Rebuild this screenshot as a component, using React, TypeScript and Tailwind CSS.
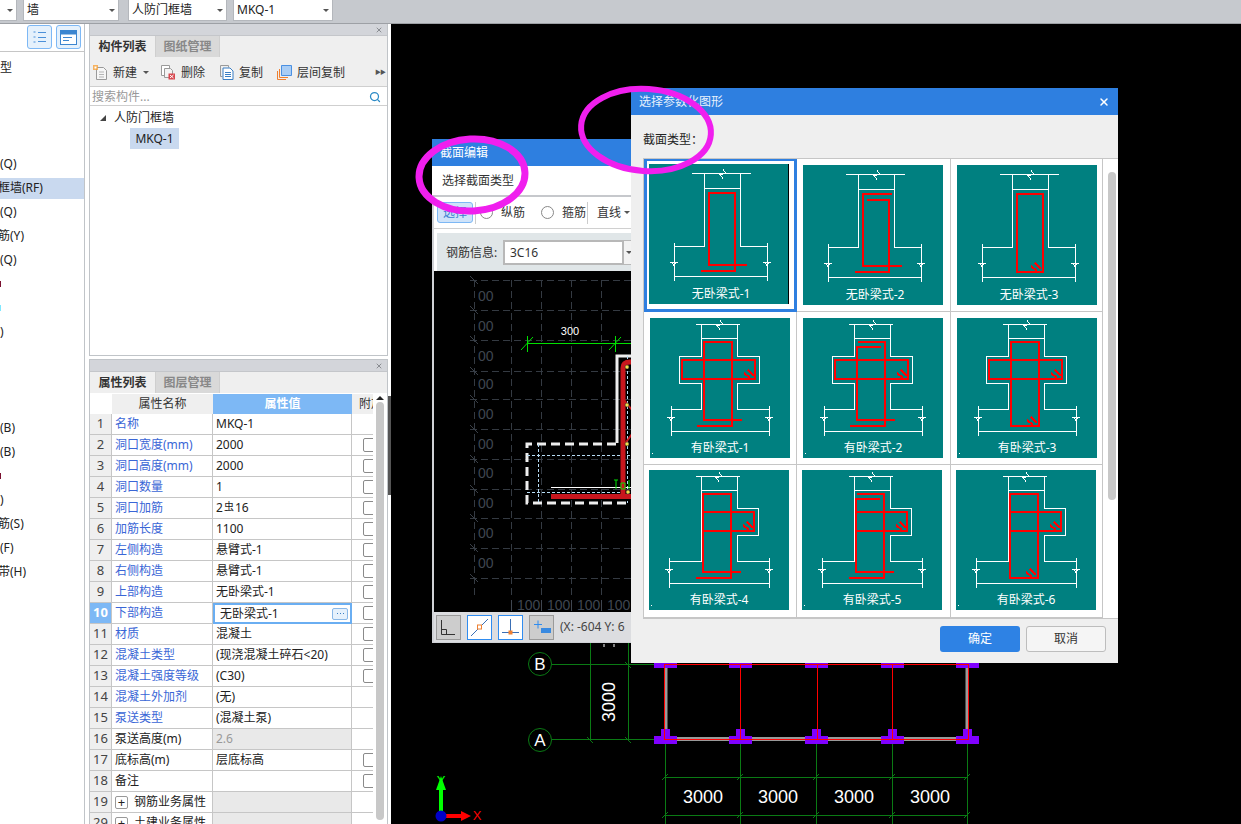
import { Search, X } from 'lucide-react';

const FONT = "[font-family:'Noto_Sans','Noto_Sans_CJK_SC',sans-serif]";

// left tree, only the part that is not covered is visible
const treeRows: { t: string; shift?: boolean; active?: boolean; tiny?: string }[] = [
  { t: '型' }, { t: '' }, { t: '' }, { t: '' },
  { t: '(Q)' },
  { t: '框墙(RF)', shift: true, active: true },
  { t: '(Q)' },
  { t: '筋(Y)', shift: true },
  { t: '(Q)' },
  { t: '', tiny: 'bg-[#7a1030]' },
  { t: '', tiny: 'bg-[#7fe8ff]' },
  { t: ')' },
  { t: '' }, { t: '' }, { t: '' },
  { t: '(B)' }, { t: '(B)' },
  { t: '', tiny: 'bg-[#7a1030]' },
  { t: ')' },
  { t: '筋(S)', shift: true },
  { t: '(F)' },
  { t: '带(H)', shift: true },
];

type Prop = { n: string; v: React.ReactNode; link?: boolean; check?: boolean; grey?: boolean; plus?: boolean; num?: number };

const props: Prop[] = [
  { n: '名称', v: 'MKQ-1', link: true },
  { n: '洞口宽度(mm)', v: '2000', link: true, check: true },
  { n: '洞口高度(mm)', v: '2000', link: true, check: true },
  { n: '洞口数量', v: '1', link: true, check: true },
  { n: '洞口加筋', v: <>2<span className="text-[10px] relative -top-px px-px">虫</span>16</>, link: true, check: true },
  { n: '加筋长度', v: '1100', link: true, check: true },
  { n: '左侧构造', v: '悬臂式-1', link: true, check: true },
  { n: '右侧构造', v: '悬臂式-1', link: true, check: true },
  { n: '上部构造', v: '无卧梁式-1', link: true, check: true },
  { n: '下部构造', v: '无卧梁式-1', link: true, check: true },
  { n: '材质', v: '混凝土', link: true, check: true },
  { n: '混凝土类型', v: '(现浇混凝土碎石<20)', link: true, check: true },
  { n: '混凝土强度等级', v: '(C30)', link: true, check: true },
  { n: '混凝土外加剂', v: '(无)', link: true },
  { n: '泵送类型', v: '(混凝土泵)', link: true },
  { n: '泵送高度(m)', v: '2.6', grey: true },
  { n: '底标高(m)', v: '层底标高', check: true },
  { n: '备注', v: '', check: true },
  { n: '钢筋业务属性', v: '', plus: true, grey: true },
  { n: '土建业务属性', v: '', plus: true, grey: true, num: 29 },
];

function Dropdown({ text, className }: { text?: string; className: string }) {
  return (
    <div className={`h-[21px] bg-white border-b border-r border-l border-[#b4b7bc] flex items-center pl-[3px] pr-[3px] text-xs text-[#222] ${className}`}>
      <span className="flex-1">{text}</span>
      <span className="w-0 h-0 border-x-[3px] border-x-transparent border-t-[3px] border-t-[#555]" />
    </div>
  );
}

function PanelHead({ first, second }: { first: string; second: string }) {
  return (
    <>
      <div className="h-[12px] shrink-0 bg-[#d3d5da] border-b border-[#c4c6ca] flex items-center justify-end pr-[4px]">
        <X size={8} strokeWidth={3} className="text-[#8a8d92]" />
      </div>
      <div className="h-[21px] shrink-0 bg-[#efefef] flex text-xs">
        <div className="w-[65px] pt-px flex items-center justify-center font-bold text-[#333]">{first}</div>
        <div className="w-[65px] pt-px flex items-center justify-center font-bold text-[#888] bg-[#d9d9d9] border-l border-r border-[#cfcfcf]">{second}</div>
      </div>
    </>
  );
}

function ToolIcon({ kind }: { kind: string }) {
  if (kind === 'new')
    return (
      <svg width="15" height="15" viewBox="0 0 15 15">
        <path d="M3.5 2.5h7l3 3v9h-10z" fill="#f6f6f6" stroke="#9a9a9a" />
        <path d="M6 7h5M6 9.5h5M6 12h5" stroke="#b5b5b5" />
        <path d="M0 0h5v5H0z" fill="#f7a23b" opacity=".8" />
        <path d="M1.5 1.5h2v2h-2z" fill="#fff" />
      </svg>
    );
  if (kind === 'del')
    return (
      <svg width="15" height="15" viewBox="0 0 15 15">
        <path d="M.5 .5h8v10h-8z" fill="#fff" stroke="#9a9a9a" />
        <path d="M3.5 3.5h6l2 2v7h-8z" fill="#f3f3f3" stroke="#9a9a9a" />
        <path d="M7.5 8.5h6.5v6h-6.5z" fill="#d8474e" />
        <path d="M9 10l3.5 3M12.5 10L9 13" stroke="#fff" />
      </svg>
    );
  if (kind === 'copy')
    return (
      <svg width="14" height="15" viewBox="0 0 14 15">
        <path d="M.5 .5h8v2" fill="none" stroke="#9a9a9a" />
        <path d="M.5 .5v11h2" fill="none" stroke="#9a9a9a" />
        <path d="M3 3h7l3 3v8.500H3z" fill="#fff" stroke="#3b7fc4" />
        <path d="M5 7.500h6M5 9.500h6M5 11.500h6" stroke="#3b7fc4" />
      </svg>
    );
  return (
    <svg width="15" height="15" viewBox="0 0 15 15">
      <path d="M.5 14.500V6M.5 14.500H9" fill="none" stroke="#f08030" />
      <path d="M2.500 12.500V4M2.500 12.500H11" fill="none" stroke="#f08030" />
      <path d="M4.500 .5h10v10h-10z" fill="#a9cdf5" stroke="#4a90e2" />
    </svg>
  );
}

function Tool({ icon, text, className }: { icon: string; text: string; className?: string }) {
  return (
    <div className={`flex items-center gap-[5px] text-xs text-[#333] ${className ?? ''}`}>
      <ToolIcon kind={icon} />
      <span>{text}</span>
    </div>
  );
}

function PropRow({ row, idx }: { row: Prop; idx: number }) {
  const isActive = idx === 10;
  return (
    <div className="grid grid-cols-[22px_101px_139px_21px] h-[21px] shrink-0 text-xs overflow-hidden">
      <div className={`flex items-center justify-center border-r border-b border-[#c6c6c6] text-[13px] ${isActive ? 'bg-[#7db8f5] text-white font-bold' : 'bg-[#efefef] text-[#444]'}`}>
        {row.num ?? idx}
      </div>
      <div className={`flex items-center pl-[3px] border-r border-b border-[#c6c6c6] whitespace-nowrap ${row.link ? 'text-[#3a66d6]' : 'text-[#222]'}`}>
        {row.plus && (
          <span className="w-[13px] h-[13px] mr-[6px] border border-[#999] rounded-[2px] flex items-center justify-center text-[13px] leading-none text-[#222]">+</span>
        )}
        {row.n}
      </div>
      {isActive ? (
        <div className="flex items-center pl-[5px] pr-[2px] border-2 border-[#6aaef2] text-[#222]">
          <span className="flex-1">{row.v}</span>
          <span className="w-[16px] h-[12px] border border-[#8ab8e8] bg-[#e6f1fc] rounded-[2px] flex items-center justify-center gap-[2px]">
            <i className="w-px h-px bg-[#3b7fc4]" /><i className="w-px h-px bg-[#3b7fc4]" /><i className="w-px h-px bg-[#3b7fc4]" />
          </span>
        </div>
      ) : (
        <div className={`flex items-center pl-[3px] border-r border-b border-[#c6c6c6] whitespace-nowrap ${row.grey ? 'bg-[#e9e9e9] text-[#999]' : 'text-[#222]'}`}>
          {row.v}
        </div>
      )}
      <div className="border-b border-[#c6c6c6] pl-[11px] pt-[3px] overflow-hidden">
        {row.check && <div className="w-[13px] h-[14px] border border-[#8a8a8a] rounded-[2px] bg-white" />}
      </div>
    </div>
  );
}

// the teal section thumbnails
function BreakTop({ x, y }: { x: number; y: number }) {
  return <path d={`M${x} ${y - 4}L${x + 3} ${y}L${x - 3} ${y + 1}L${x} ${y + 5}`} fill="none" stroke="#fff" />;
}

function BreakSide({ x, y }: { x: number; y: number }) {
  return <path d={`M${x - 4} ${y}H${x + 4}M${x - 2} ${y}L${x} ${y + 4}L${x + 2} ${y}`} fill="none" stroke="#fff" />;
}

function Hook({ x, y }: { x: number; y: number }) {
  return <path d={`M${x - 10} ${y - 5}L${x - 4} ${y}M${x - 6} ${y - 8}L${x} ${y - 2}`} fill="none" stroke="#f00" strokeWidth="2" />;
}

function Section({ beam, style, label, selected }: { beam: 'none' | 'both' | 'right'; style: 1 | 2 | 3; label: string; selected?: boolean }) {
  let outline: string;
  let yDim = 112;
  let xl = 25;
  let xr = 118;
  if (beam === 'none') {
    outline = 'M43 9.500H102M55 9.500V82H25M91 9.500V82H118M55 24H91M25 79V117M118 79V117M25 112H118';
  } else if (beam === 'both') {
    xl = 21;
    xr = 119;
    yDim = 113;
    outline = 'M46 6.500H90M51 6.500V38.500H29V65.500H51V91.500H21M87 6.500V38.500H109V65.500H87V91.500H119M51 20.500H87M21 88V118M119 88V118M21 113.500H119';
  } else {
    xl = 20;
    xr = 120;
    yDim = 113;
    outline = 'M47 6.500H91M52 6.500V91.500H20M88 6.500V38.500H109V65.500H88V91.500H120M52 20.500H88M20 88V118M120 88V118M20 113.500H120';
  }
  const plain = beam === 'none';
  const tx = plain ? 74 : 70;
  const ty = plain ? 9.5 : 6.5;
  const vb = plain ? 107 : 108;
  return (
    <svg width="140" height="140" viewBox="0 0 140 140" className="block" style={{ shapeRendering: 'crispEdges' }}>
      <rect width="140" height="140" fill="#008080" />
      {selected && <path d="M140 0V140" stroke="#000" strokeWidth="1.500" />}
      <path d={outline} fill="none" stroke="#fff" />
      <BreakTop x={tx} y={ty} />
      <BreakSide x={xl} y={yDim - 14} />
      <BreakSide x={xr} y={yDim - 14} />
      <g fill="none" stroke="#f00" strokeWidth="2">
        {style === 1 && <path d={plain ? 'M52 107H86V29H60V101H98' : 'M47 108H82V24H54V102H92'} />}
        {style === 2 && (
          <>
            <path d={plain ? 'M52 107H86V35H64' : 'M47 108H82V24H55'} />
            <path d={plain ? 'M89 29H60V101H99' : 'M78 29H54V102H92'} />
          </>
        )}
        {style === 3 && <path d={plain ? 'M60 29H86V107H60Z' : 'M54 24H82V108H54Z'} />}
        {beam === 'both' && <path d="M32 42H105V61H32Z" />}
        {beam === 'right' && <path d="M55 42H105V61H55" />}
      </g>
      {style === 3 && <Hook x={plain ? 84 : 80} y={vb - 1} />}
      {!plain && <Hook x={104} y={60} />}
      {!plain && <rect x="2" y="135" width="1" height="1" fill="#fff" />}
      <text x={plain ? 72 : 70} y="134" textAnchor="middle" fontSize="12" fill="#fff" style={{ shapeRendering: 'auto' }}>{label}</text>
    </svg>
  );
}

const ROW_YS = [340, 371, 399, 429, 459, 489, 518, 548, 578];

function SectionCanvas() {
  return (
    <svg viewBox="434 271 198 341" className="w-[198px] h-[341px] block bg-black">
      <g stroke="#343a42" strokeDasharray="7 4" fill="none">
        {[280, 310, ...ROW_YS].map((y) => <path key={y} d={`M470 ${y}.5H632`} />)}
        {[474, 511, 541, 571, 601, 631].map((x) => <path key={x} d={`M${x}.5 280V598`} />)}
      </g>
      {[280, 310, ...ROW_YS].map((y) => <path key={y} d={`M470 ${y - 4}L478 ${y + 4}`} stroke="#3a4048" />)}
      <g fill="#3f4650" fontSize="14" fontFamily="'Liberation Sans',sans-serif">
        {[301, 331, 361, 389, 419, 449, 478, 508, 538, 568].map((y) => <text key={y} x="478" y={y}>00</text>)}
        {[517, 547, 577, 607].map((x) => <text key={x} x={x} y="610">100</text>)}
        {[511, 541, 571, 601].map((x) => <path key={x} d={`M${x}.5 600V611`} stroke="#3f4650" />)}
      </g>
      <text x="570" y="335" fill="#fff" fontSize="11" textAnchor="middle" fontFamily="'Liberation Sans',sans-serif">300</text>
      <path d="M527 343.500H632M527.500 336V352M521 350L533 337M615.500 336V352M609 350L621 337" stroke="#00e000" fill="none" />
      <path d="M617 443V356H632" stroke="#eee" strokeWidth="3" fill="none" />
      <path d="M616 444H527V503H632" stroke="#eee" strokeWidth="3" strokeDasharray="9 5" fill="none" />
      <path d="M527 455.500H632M527 492.500H632M538.500 444V503M627.500 356V503" stroke="#b7dcf5" strokeDasharray="3 2" fill="none" />
      <path d="M551 487.500H632" stroke="#fff" />
      <path d="M551 496.500H632" stroke="#c8161d" strokeWidth="5" />
      <path d="M623 496V368Q623 362 630 362H632" stroke="#c8161d" strokeWidth="5" fill="none" />
      <path d="M624 400L632 410M624 445L632 434" stroke="#c8161d" strokeWidth="2" />
      <path d="M614 480H618M616 480V489M621 483H625V489H621ZM629 480V489" stroke="#00e000" fill="none" />
      {[[627, 367], [627, 405], [627, 444], [628, 492]].map(([x, y]) => (
        <circle key={y} cx={x} cy={y} r="2" fill="#f5e04a" stroke="#222" strokeWidth=".5" />
      ))}
    </svg>
  );
}

function BarButton({ kind, on }: { kind: number; on?: boolean }) {
  return (
    <div className={`w-[25px] h-[25px] border flex items-center justify-center ${on ? 'bg-white border-[#2f8cf0]' : 'bg-[#cdcdcd] border-[#9a9a9a]'}`}>
      <svg width="21" height="21" viewBox="0 0 21 21">
        {kind === 0 && <path d="M3.500 3V17.500H17M3.500 12.500H8.500V17.500" fill="none" stroke="#333" />}
        {kind === 1 && (
          <>
            <path d="M2 19L19 2" stroke="#3a6fb5" />
            <rect x="8.500" y="8" width="4" height="4" fill="#fff" stroke="#f08030" />
          </>
        )}
        {kind === 2 && (
          <>
            <path d="M10.500 2V15M2 15.500H19" stroke="#3a6fb5" />
            <rect x="8.500" y="13.500" width="4" height="4" fill="#f08030" />
          </>
        )}
        {kind === 3 && (
          <>
            <path d="M3 7.500H11M7 3.500V11.500" stroke="#2f8cf0" />
            <rect x="10" y="11" width="10" height="5" fill="#3a8ae0" />
          </>
        )}
      </svg>
    </div>
  );
}

function SectionWindow() {
  return (
    <div className="absolute left-[41px] top-[115px] w-[200px] h-[504px] overflow-hidden bg-[#d0d2d6] flex flex-col">
      <div className="h-[27px] shrink-0 bg-[#2e7fe0] text-white text-xs flex items-center pl-[8px]">截面编辑</div>
      <div className="h-[29px] shrink-0 bg-white flex items-center pl-[10px] pt-px text-xs text-[#333]">选择截面类型</div>
      <div className="h-[2px] shrink-0 bg-[#c6c8cc]" />
      <div className="h-[32px] shrink-0 bg-white border-b border-[#d0d0d0] ml-[2px] flex items-center text-xs text-[#333] whitespace-nowrap">
        <div className="w-[36px] h-[21px] ml-[3px] rounded-[3px] bg-[#cfe3f9] border border-[#7db8f5] text-[#3a7fd0] flex items-center justify-center">选择</div>
        <div className="w-px h-[22px] bg-[#ccc] ml-[2px]" />
        <div className="w-[13px] h-[13px] rounded-full border border-[#888] ml-[4px]" />
        <span className="ml-[8px]">纵筋</span>
        <div className="w-[13px] h-[13px] rounded-full border border-[#888] ml-[16px]" />
        <span className="ml-[8px]">箍筋</span>
        <div className="w-px h-[22px] bg-[#ccc] ml-px" />
        <span className="ml-[9px]">直线</span>
        <span className="ml-[3px] w-0 h-0 border-x-[3px] border-x-transparent border-t-[3px] border-t-[#555]" />
      </div>
      <div className="shrink-0 ml-[2px] bg-white pt-[4px] pl-[3px]">
        <div className="h-[38px] bg-[#e0e6e8] flex items-center pl-[9px] pt-px text-xs text-[#333]">
          <span className="w-[57px] whitespace-nowrap">钢筋信息:</span>
          <div className="w-[121px] h-[25px] border-2 border-[#b8b8b8] bg-white flex items-center pl-[5px] shrink-0">3C16</div>
          <div className="h-[25px] flex-1 bg-[#f2f2f2] border-y border-[#b8b8b8] flex items-center pl-[2px]">
            <span className="w-0 h-0 border-x-[3px] border-x-transparent border-t-[3px] border-t-[#555]" />
          </div>
        </div>
      </div>
      <div className="ml-[2px] shrink-0"><SectionCanvas /></div>
      <div className="h-[30px] shrink-0 ml-[2px] bg-[#dcdde0] flex items-center gap-[6px] pl-[2px] whitespace-nowrap">
        <BarButton kind={0} />
        <BarButton kind={1} on />
        <BarButton kind={2} on />
        <BarButton kind={3} />
        <span className="text-xs text-[#444]">(X: -604 Y: 6</span>
      </div>
    </div>
  );
}

function ParamWindow() {
  return (
    <div className="absolute left-[240px] top-[64px] w-[487px] h-[575px] bg-[#efefef] flex flex-col">
      <div className="h-[27px] shrink-0 bg-[#2e7fe0] text-[#e8f1fc] text-xs flex items-center pl-[8px] pr-[8px]">
        <span className="flex-1">选择参数化图形</span>
        <X size={12} strokeWidth={3} className="text-white" />
      </div>
      <div className="h-[43px] shrink-0 flex items-center pl-[12px] text-xs text-[#222] pt-[7px]">截面类型：</div>
      <div className="h-[461px] shrink-0 ml-[12px] bg-white border-t border-l border-b border-[#c6c6c6] flex overflow-hidden">
        <div className="grid grid-cols-[153px_154px_152px] auto-rows-[153px]">
          <div className="border-[3px] border-[#2e7fe0] -mt-px pl-[2px] pt-[3px] bg-white"><Section beam="none" style={1} label="无卧梁式-1" selected /></div>
          <div className="border-r border-b border-[#c6c6c6] pl-[6px] pt-[6px]"><Section beam="none" style={2} label="无卧梁式-2" /></div>
          <div className="border-r border-b border-[#c6c6c6] pl-[6px] pt-[6px]"><Section beam="none" style={3} label="无卧梁式-3" /></div>
          <div className="border-r border-b border-[#c6c6c6] pl-[6px] pt-[6px]"><Section beam="both" style={1} label="有卧梁式-1" /></div>
          <div className="border-r border-b border-[#c6c6c6] pl-[6px] pt-[6px]"><Section beam="both" style={2} label="有卧梁式-2" /></div>
          <div className="border-r border-b border-[#c6c6c6] pl-[6px] pt-[6px]"><Section beam="both" style={3} label="有卧梁式-3" /></div>
          <div className="border-r border-b border-[#c6c6c6] pl-[5px] pt-[5px]"><Section beam="right" style={1} label="有卧梁式-4" /></div>
          <div className="border-r border-b border-[#c6c6c6] pl-[5px] pt-[5px]"><Section beam="right" style={2} label="有卧梁式-5" /></div>
          <div className="border-r border-b border-[#c6c6c6] pl-[5px] pt-[5px]"><Section beam="right" style={3} label="有卧梁式-6" /></div>
        </div>
        <div className="w-[15px] pl-[5px] pt-[13px] bg-white">
          <div className="w-[8px] h-[328px] rounded-full bg-[#c8c8c8]" />
        </div>
      </div>
      <div className="flex justify-end gap-[6px] pr-[12px] pt-[7px] text-xs">
        <div className="w-[80px] h-[26px] rounded-[3px] bg-[#2e82e4] text-white flex items-center justify-center">确定</div>
        <div className="w-[80px] h-[26px] rounded-[3px] bg-[#f5f5f5] border border-[#bdbdbd] text-[#333] flex items-center justify-center">取消</div>
      </div>
    </div>
  );
}

const COLS = [665, 740, 816, 892, 967];

function MainDrawing() {
  return (
    <svg viewBox="391 24 850 800" className="absolute inset-0 w-full h-full">
      <g stroke="#0a7a14" fill="none">
        <circle cx="540" cy="664" r="11.500" />
        <circle cx="540" cy="740" r="11.500" />
        <path d="M552 664.500H668M552 739.500H668M590.500 640V740M628.500 640V740" />
        {COLS.map((x) => <path key={x} d={`M${x + 0.5} 740V824`} />)}
        <path d="M665 777.500H967M665 815.500H967" />
        {COLS.map((x) => (
          <g key={x}>
            <path d={`M${x - 3} 780L${x + 3} 774`} />
            <path d={`M${x - 3} 818L${x + 3} 812`} />
          </g>
        ))}
        <path d="M587 737L593 743M625 737L631 743M625 662L631 668" />
      </g>
      <g fill="#fff" fontFamily="'Liberation Sans',sans-serif" textAnchor="middle">
        <text x="540" y="670" fontSize="17">B</text>
        <text x="540" y="746" fontSize="17">A</text>
        <text x="0" y="0" fontSize="18" transform="translate(615 702) rotate(-90)">3000</text>
        {[703, 778, 854, 930].map((x) => <text key={x} x={x} y="803" fontSize="18">3000</text>)}
      </g>
      <path d="M604 644V647M614 644V647" stroke="#fff" />
      <path d="M665 739H967" stroke="#999" strokeWidth="4" />
      <path d="M666 666V737M967 666V737" stroke="#999" strokeWidth="3" />
      <g fill="#8000ff">
        {COLS.map((x) => (
          <g key={x}>
            <rect x={x - 11} y="736" width="23" height="8" />
            <rect x={x - 4} y="729" width="9" height="8" />
            <rect x={x - 11} y="663" width="23" height="5" />
          </g>
        ))}
      </g>
      <path d="M664 664.500H968M664 739.500H968" stroke="#f00" />
      {[664, 740, 817, 892, 968].map((x) => <path key={x} d={`M${x + 0.5} 664V740`} stroke="#f00" />)}
      {/* axis */}
      <path d="M441 812V790" stroke="#0f0" strokeWidth="4" />
      <path d="M441 776L436 790H446Z" fill="#0f0" />
      <path d="M445 816H462" stroke="#f00" strokeWidth="4" />
      <path d="M471 816L461 811V821Z" fill="#f00" />
      <circle cx="441" cy="816" r="5.500" fill="#0000c8" />
      <text x="441" y="785" fill="#0f0" fontSize="13" textAnchor="middle" fontFamily="'Liberation Sans',sans-serif">Y</text>
      <text x="477" y="820" fill="#f00" fontSize="13" textAnchor="middle" fontFamily="'Liberation Sans',sans-serif">X</text>
    </svg>
  );
}

export default function App() {
  return (
    <div className={`w-[1241px] h-[824px] overflow-hidden relative bg-white flex flex-col ${FONT}`}>
      {/* top combo bar */}
      <div className="h-[24px] shrink-0 bg-[#c6c9ce] border-b border-[#9da0a5] flex items-start">
        <Dropdown className="w-[17px] border-l-0" />
        <Dropdown text="墙" className="w-[96px] ml-[6px]" />
        <Dropdown text="人防门框墙" className="w-[99px] ml-[9px]" />
        <Dropdown text="MKQ-1" className="w-[100px] ml-[6px]" />
      </div>

      <div className="flex-1 flex min-h-0">
        {/* left tree */}
        <div className="w-[85px] shrink-0 border-r border-[#c0c4c8] flex flex-col text-xs text-[#222]">
          <div className="h-[28px] shrink-0 border-b border-[#c6c6c6] flex items-start justify-end gap-[4px] pr-[3px] pt-px">
            <div className="w-[25px] h-[24px] rounded-[3px] border border-[#7db8f5] bg-[#e5f1fc] flex items-center justify-center">
              <svg width="13" height="12" viewBox="0 0 13 12" fill="none" stroke="#4a90d9">
                <path d="M.5 1h2M.5 6h2M.5 11h2M5 1.500h8M5 6.500h8M5 10.500h8" />
              </svg>
            </div>
            <div className="w-[25px] h-[24px] rounded-[3px] border border-[#7db8f5] bg-[#e5f1fc] flex items-center justify-center">
              <svg width="17" height="15" viewBox="0 0 17 15" fill="none" stroke="#3d86d0">
                <rect x=".5" y=".5" width="16" height="14" fill="#fff" />
                <path d="M1 1h15v3H1z" fill="#3d86d0" />
                <path d="M3 7.500h9M3 10.500h6" />
              </svg>
            </div>
          </div>
          <div className="flex flex-col pt-[4px]">
            {treeRows.map((r, i) => (
              <div key={i} className="h-[24px] flex items-center overflow-hidden">
                <div className={`h-[21px] w-full flex items-center whitespace-nowrap ${r.active ? 'bg-[#c9d9ef]' : ''}`}>
                  {r.tiny ? <i className={`w-px h-[6px] ${r.tiny}`} /> : <span className={r.shift ? '-ml-[2px]' : ''}>{r.t}</span>}
                </div>
              </div>
            ))}
          </div>
        </div>

        <div className="w-[4px] shrink-0 bg-white" />

        {/* component + property panels */}
        <div className="w-[299px] shrink-0 flex flex-col gap-[3px]">
          <div className="h-[332px] shrink-0 border border-t-0 border-[#c0c4c8] flex flex-col bg-white">
            <PanelHead first="构件列表" second="图纸管理" />
            <div className="h-[30px] shrink-0 bg-[#efefef] border-b border-[#cfcfcf] flex items-center pl-[3px] pt-[2px] whitespace-nowrap">
              <Tool icon="new" text="新建" />
              <span className="ml-[6px] w-0 h-0 border-x-[3px] border-x-transparent border-t-[3px] border-t-[#555]" />
              <Tool icon="del" text="删除" className="ml-[12px]" />
              <Tool icon="copy" text="复制" className="ml-[15px]" />
              <Tool icon="layer" text="层间复制" className="ml-[14px]" />
              <span className="ml-auto mr-[2px] text-[6px] text-[#555] tracking-[-1px]">▶▶</span>
            </div>
            <div className="h-[19px] shrink-0 border-b border-[#cfcfcf] flex items-center pl-[2px] pr-[6px] pt-px text-xs text-[#999]">
              <span className="flex-1">搜索构件...</span>
              <Search size={12} strokeWidth={2.5} className="text-[#2b8ac6]" />
            </div>
            <div className="flex items-center h-[21px] mt-px pl-[10px] text-xs text-[#222]">
              <span className="w-0 h-0 border-l-[6px] border-l-transparent border-b-[6px] border-b-[#444]" />
              <span className="ml-[8px]">人防门框墙</span>
            </div>
            <div className="h-[21px] ml-[40px] w-[49px] bg-[#c9d9ef] text-xs text-[#222] flex items-center justify-center">MKQ-1</div>
          </div>

          <div className="flex-1 min-h-0 border border-[#c0c4c8] border-b-0 flex flex-col bg-white overflow-hidden">
            <PanelHead first="属性列表" second="图层管理" />
            <div className="flex flex-1 min-h-0">
              <div className="flex flex-col w-[283px] shrink-0 overflow-hidden pt-px">
                <div className="grid grid-cols-[22px_101px_139px_21px] h-[20px] shrink-0 text-xs">
                  <div className="bg-white" />
                  <div className="bg-[#efefef] flex items-center justify-center text-[#333]">属性名称</div>
                  <div className="bg-[#7db8f5] text-white font-bold flex items-center justify-center">属性值</div>
                  <div className="bg-[#efefef] pl-[7px] text-[#333] overflow-hidden flex items-center whitespace-nowrap">附加</div>
                </div>
                {props.map((r, i) => <PropRow key={i} row={r} idx={i + 1} />)}
              </div>
              <div className="flex-1 flex flex-col items-center pt-[3px]">
                <span className="w-0 h-0 border-x-[4px] border-x-transparent border-b-[4px] border-b-[#222]" />
                <div className="w-[8px] h-[418px] mt-[2px] rounded-full bg-[#c8c8c8]" />
              </div>
            </div>
          </div>
        </div>

        {/* splitter */}
        <div className="w-[3px] shrink-0 bg-white pt-[372px]">
          <div className="w-[3px] h-[99px] bg-[#555]" />
        </div>

        {/* drawing area with floating dialogs */}
        <div className="flex-1 relative bg-black overflow-hidden">
          <MainDrawing />
          <SectionWindow />
          <ParamWindow />
          <svg viewBox="391 24 850 800" className="absolute inset-0 w-full h-full pointer-events-none">
            <ellipse cx="472" cy="175" rx="53" ry="36" fill="none" stroke="#f01fee" strokeWidth="7" transform="rotate(-3 472 175)" />
            <ellipse cx="646" cy="130" rx="65" ry="41" fill="none" stroke="#f01fee" strokeWidth="6" transform="rotate(4 646 130)" />
          </svg>
        </div>
      </div>
    </div>
  );
}
